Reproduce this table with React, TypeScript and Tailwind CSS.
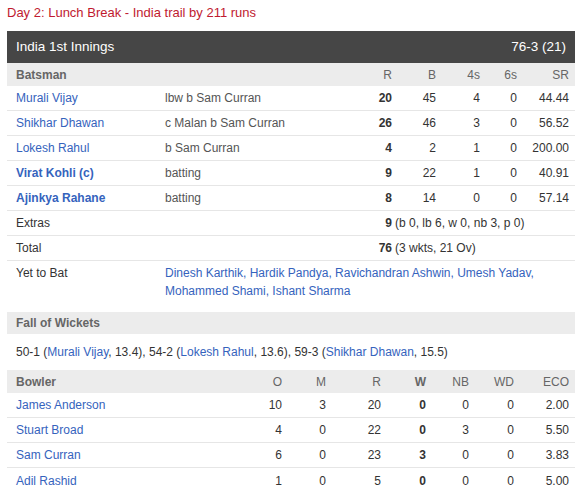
const BATTING = [
  { name: 'Murali Vijay', how: 'lbw b Sam Curran', r: 20, b: 45, fours: 4, sixes: 0, sr: '44.44', bold: false },
  { name: 'Shikhar Dhawan', how: 'c Malan b Sam Curran', r: 26, b: 46, fours: 3, sixes: 0, sr: '56.52', bold: false },
  { name: 'Lokesh Rahul', how: 'b Sam Curran', r: 4, b: 2, fours: 1, sixes: 0, sr: '200.00', bold: false },
  { name: 'Virat Kohli (c)', how: 'batting', r: 9, b: 22, fours: 1, sixes: 0, sr: '40.91', bold: true },
  { name: 'Ajinkya Rahane', how: 'batting', r: 8, b: 14, fours: 0, sixes: 0, sr: '57.14', bold: true },
]

const BOWLING = [
  { name: 'James Anderson', o: 10, m: 3, r: 20, w: 0, nb: 0, wd: 0, eco: '2.00' },
  { name: 'Stuart Broad', o: 4, m: 0, r: 22, w: 0, nb: 3, wd: 0, eco: '5.50' },
  { name: 'Sam Curran', o: 6, m: 0, r: 23, w: 3, nb: 0, wd: 0, eco: '3.83' },
  { name: 'Adil Rashid', o: 1, m: 0, r: 5, w: 0, nb: 0, wd: 0, eco: '5.00' },
]

const BAT_COLS = 'grid-cols-[149px_197px_30px_44px_44px_37px_52px]'
const BOWL_COLS = 'grid-cols-[226px_40px_44px_55px_45px_43px_45px_55px]'

const link = 'text-[#3563bd]'

export default function App() {
  return (
    <div className="min-h-screen bg-white px-[7px] font-['Liberation_Sans',Arial,sans-serif] text-[12px] text-[#333]">
      <div className="flex h-[31px] items-center pb-[5px] text-[13px] text-[#c01a30]">
        Day 2: Lunch Break - India trail by 211 runs
      </div>

      {/* innings header */}
      <div className="flex h-[32px] items-center justify-between bg-[#464646] px-[9px] text-[13.5px] text-white">
        <span>India 1st Innings</span>
        <span>76-3 (21)</span>
      </div>

      <div className={`grid h-[23px] ${BAT_COLS} items-center bg-[#ececec] px-[9px] font-bold text-[#666]`}>
        <span>Batsman</span>
        <span />
        <span className="text-right font-normal">R</span>
        <span className="text-right font-normal">B</span>
        <span className="text-right font-normal">4s</span>
        <span className="text-right font-normal">6s</span>
        <span className="text-right font-normal">SR</span>
      </div>

      {BATTING.map((p) => (
        <div key={p.name} className={`grid h-[25px] ${BAT_COLS} items-center border-b border-[#e6e6e6] px-[9px]`}>
          <span className={`${link} ${p.bold ? 'font-bold' : ''}`}>{p.name}</span>
          <span className="text-[#555]">{p.how}</span>
          <span className="text-right font-bold">{p.r}</span>
          <span className="text-right">{p.b}</span>
          <span className="text-right">{p.fours}</span>
          <span className="text-right">{p.sixes}</span>
          <span className="text-right">{p.sr}</span>
        </div>
      ))}

      <div className={`grid h-[25px] ${BAT_COLS} items-center border-b border-[#e6e6e6] px-[9px]`}>
        <span>Extras</span>
        <span />
        <span className="text-right font-bold">9</span>
        <span className="col-span-4 whitespace-nowrap pl-[3px]">(b 0, lb 6, w 0, nb 3, p 0)</span>
      </div>

      <div className={`grid h-[25px] ${BAT_COLS} items-center border-b border-[#e6e6e6] px-[9px]`}>
        <span>Total</span>
        <span />
        <span className="text-right font-bold">76</span>
        <span className="col-span-4 whitespace-nowrap pl-[3px]">(3 wkts, 21 Ov)</span>
      </div>

      <div className={`grid h-[51px] ${BAT_COLS} items-start px-[9px] pt-[3px] leading-[18px]`}>
        <span>Yet to Bat</span>
        <span className={`col-span-6 ${link}`}>
          Dinesh Karthik, Hardik Pandya, Ravichandran Ashwin, Umesh Yadav, Mohammed Shami, Ishant Sharma
        </span>
      </div>

      {/* fall of wickets */}
      <div className="flex h-[22px] items-center bg-[#ececec] px-[9px] font-bold text-[#666]">Fall of Wickets</div>
      <div className="flex h-[36px] items-center px-[9px]">
        <span>
          50-1 (<span className={link}>Murali Vijay</span>, 13.4), 54-2 (<span className={link}>Lokesh Rahul</span>,
          13.6), 59-3 (<span className={link}>Shikhar Dhawan</span>, 15.5)
        </span>
      </div>

      {/* bowling */}
      <div className={`grid h-[23px] ${BOWL_COLS} items-center bg-[#ececec] px-[9px] text-[#666]`}>
        <span className="font-bold">Bowler</span>
        <span className="text-right">O</span>
        <span className="text-right">M</span>
        <span className="text-right">R</span>
        <span className="text-right font-bold">W</span>
        <span className="text-right">NB</span>
        <span className="text-right">WD</span>
        <span className="text-right">ECO</span>
      </div>

      {BOWLING.map((b, i) => (
        <div
          key={b.name}
          className={`grid h-[25px] ${BOWL_COLS} items-center px-[9px] ${i < BOWLING.length - 1 ? 'border-b border-[#e6e6e6]' : ''}`}
        >
          <span className={link}>{b.name}</span>
          <span className="text-right">{b.o}</span>
          <span className="text-right">{b.m}</span>
          <span className="text-right">{b.r}</span>
          <span className="text-right font-bold">{b.w}</span>
          <span className="text-right">{b.nb}</span>
          <span className="text-right">{b.wd}</span>
          <span className="text-right">{b.eco}</span>
        </div>
      ))}
    </div>
  )
}
